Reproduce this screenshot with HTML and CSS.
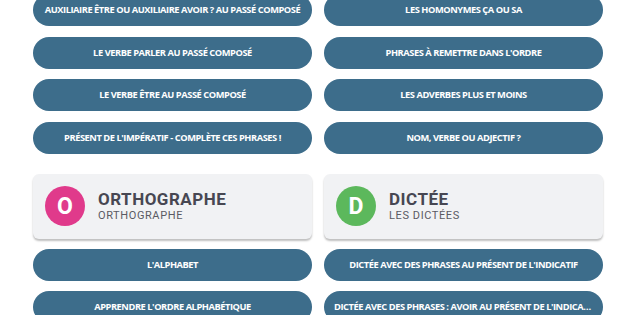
FILE: index.html
```html
<!DOCTYPE html>
<html lang="fr">
<head>
<meta charset="UTF-8">
<meta name="viewport" content="width=device-width, initial-scale=1.0">
<title>Exercices de français</title>
<link rel="stylesheet" href="styles.css">
</head>
<body>

<div class="lessons">
    <div class="lesson-grid">
        <a class="lesson-btn" href="#">Auxiliaire être ou auxiliaire avoir ? au passé composé</a>
        <a class="lesson-btn" href="#">Les homonymes ça ou sa</a>
        <a class="lesson-btn" href="#">Le verbe parler au passé composé</a>
        <a class="lesson-btn" href="#">Phrases à remettre dans l'ordre</a>
        <a class="lesson-btn" href="#">Le verbe être au passé composé</a>
        <a class="lesson-btn" href="#">Les adverbes plus et moins</a>
        <a class="lesson-btn" href="#">Présent de l'impératif - complète ces phrases !</a>
        <a class="lesson-btn" href="#">Nom, verbe ou adjectif ?</a>
    </div>

    <div class="lesson-grid section">
        <div class="category-card">
            <div class="category-icon pink">O</div>
            <div class="category-text">
                <div class="category-title">Orthographe</div>
                <div class="category-sub">Orthographe</div>
            </div>
        </div>
        <div class="category-card">
            <div class="category-icon green">D</div>
            <div class="category-text">
                <div class="category-title">Dictée</div>
                <div class="category-sub">Les dictées</div>
            </div>
        </div>
        <a class="lesson-btn" href="#">L'alphabet</a>
        <a class="lesson-btn" href="#">Dictée avec des phrases au présent de l'indicatif</a>
        <a class="lesson-btn" href="#">Apprendre l'ordre alphabétique</a>
        <a class="lesson-btn" href="#">Dictée avec des phrases : avoir au présent de l'indicatif</a>
    </div>
</div>

</body>
</html>
```

FILE: styles.css
```css
body {
    margin: 0;
    background: #ffffff;
    font-family: "Open Sans", Arial, sans-serif;
    overflow: hidden;
}

.lessons {
    margin-top: -6px;
    padding-left: 33px;
}

.lesson-grid {
    display: grid;
    grid-template-columns: 279px 279px;
    gap: 10.5px 12px;
}

.lesson-grid.section {
    margin-top: 20px;
    row-gap: 10px;
}

.lesson-btn {
    display: block;
    height: 32px;
    line-height: 32px;
    padding: 0 10px;
    border-radius: 16px;
    background: #3d6d8b;
    color: #ffffff;
    text-decoration: none;
    text-align: center;
    text-transform: uppercase;
    font-size: 9.3px;
    font-weight: bold;
    letter-spacing: -0.45px;
    white-space: nowrap;
    overflow: hidden;
    text-overflow: ellipsis;
}

.category-card {
    display: flex;
    align-items: center;
    gap: 13px;
    height: 65px;
    padding: 0 12px;
    background: #f1f2f4;
    border-radius: 6px;
    box-shadow: 0 2px 2px rgba(0,0,0,0.25);
}

.category-icon {
    width: 40px;
    height: 40px;
    border-radius: 50%;
    display: flex;
    align-items: center;
    justify-content: center;
    color: #ffffff;
    font-family: Roboto, Arial, sans-serif;
    font-weight: bold;
    font-size: 23px;
}

.category-icon.pink { background: #e03a8b; }
.category-icon.green { background: #5cb85c; }

.category-text {
    font-family: Roboto, Arial, sans-serif;
    text-transform: uppercase;
}

.category-title {
    font-size: 17px;
    font-weight: bold;
    letter-spacing: 0.5px;
    color: #474752;
    line-height: 19px;
}

.category-sub {
    font-size: 11px;
    letter-spacing: 0.6px;
    color: #5a5a63;
    line-height: 14px;
}
```
